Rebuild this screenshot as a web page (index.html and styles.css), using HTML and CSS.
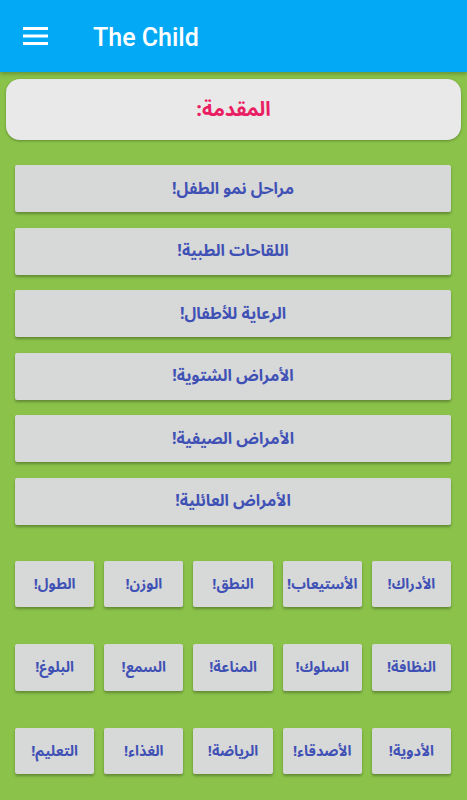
FILE: index.html
```html
<!DOCTYPE html>
<html lang="ar">
<head>
<meta charset="utf-8">
<link rel="stylesheet" href="styles.css">
</head>
<body>
<header class="toolbar">
  <svg class="menu" width="25" height="18" viewBox="0 0 25 18"><rect x="0" y="0" width="25" height="3" fill="#fff"/><rect x="0" y="7.5" width="25" height="3" fill="#fff"/><rect x="0" y="15" width="25" height="3" fill="#fff"/></svg>
  <span class="title">The Child</span>
</header>
<main class="content">
  <div class="intro" dir="rtl">المقدمة:</div>
  <div class="list" dir="rtl">
    <div class="btn">مراحل نمو الطفل!</div>
    <div class="btn">اللقاحات الطبية!</div>
    <div class="btn">الرعاية للأطفال!</div>
    <div class="btn">الأمراض الشتوية!</div>
    <div class="btn">الأمراض الصيفية!</div>
    <div class="btn">الأمراض العائلية!</div>
  </div>
  <div class="grid" dir="rtl">
    <div class="cell">الأدراك!</div>
    <div class="cell">الأستيعاب!</div>
    <div class="cell">النطق!</div>
    <div class="cell">الوزن!</div>
    <div class="cell">الطول!</div>
    <div class="cell">النظافة!</div>
    <div class="cell">السلوك!</div>
    <div class="cell">المناعة!</div>
    <div class="cell">السمع!</div>
    <div class="cell">البلوغ!</div>
    <div class="cell">الأدوية!</div>
    <div class="cell">الأصدقاء!</div>
    <div class="cell">الرياضة!</div>
    <div class="cell">الغذاء!</div>
    <div class="cell">التعليم!</div>
  </div>
</main>
</body>
</html>
```
FILE: styles.css
```css
html, body {
  margin: 0;
  padding: 0;
}
body {
  width: 467px;
  height: 800px;
  overflow: hidden;
  background: #8bc34a;
  font-family: "Noto Sans Arabic", "DejaVu Sans", "Noto Sans", sans-serif;
}
.toolbar {
  height: 72px;
  background: #03a9f4;
  display: flex;
  align-items: center;
  padding-left: 23px;
  box-shadow: 0 2px 4px rgba(0,0,0,0.25);
  position: relative;
  z-index: 1;
}
.menu {
  display: block;
  margin-top: -1px;
}
.title {
  font-family: Roboto, "Liberation Sans", sans-serif;
  font-weight: 500;
  font-size: 25px;
  color: #fff;
  margin-left: 45px;
  margin-top: 2px;
}
.content {
  padding: 7px 6px 0;
}
.intro {
  height: 61px;
  background: #e9e9e9;
  border-radius: 14px;
  display: flex;
  align-items: center;
  justify-content: center;
  color: #e91e63;
  font-size: 20px;
  font-weight: bold;
  box-shadow: 0 1px 3px rgba(0,0,0,0.3);
}
.list {
  display: flex;
  flex-direction: column;
  gap: 15.6px;
  padding: 25px 10px 0 9px;
}
.btn, .cell {
  background: #d7d8d8;
  border-radius: 2px;
  display: flex;
  align-items: center;
  justify-content: center;
  color: #3f51b5;
  font-weight: bold;
  box-shadow: 0 2px 3px rgba(0,0,0,0.3);
}
.btn {
  height: 47px;
  font-size: 16px;
}
.grid {
  display: grid;
  grid-template-columns: repeat(5, 1fr);
  column-gap: 10px;
  row-gap: 37px;
  padding: 36px 10px 0 9px;
}
.cell {
  height: 46.5px;
  font-size: 14.5px;
}
```
